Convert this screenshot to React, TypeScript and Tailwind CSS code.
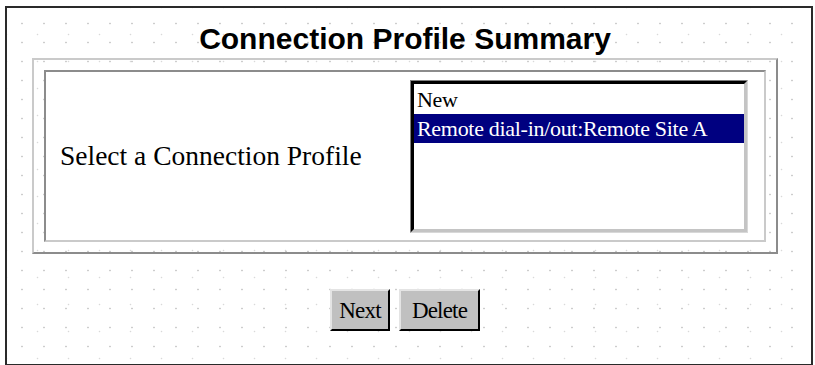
import { useState } from "react";

const profiles = ["New", "Remote dial-in/out:Remote Site A"];

function ListBox() {
  const [selected, setSelected] = useState(1);
  return (
    <div className="h-[153px] w-[338px] border border-b-[#d8d8d8] border-l-[#808080] border-r-[#d8d8d8] border-t-[#808080] bg-white">
      <div className="h-full w-full border-[3px] border-b-[#c4c4c4] border-l-black border-r-[#c4c4c4] border-t-black pt-px">
        {profiles.map((p, i) => (
          <div
            key={p}
            onClick={() => setSelected(i)}
            className={`h-[29px] cursor-default whitespace-nowrap px-[3px] text-[22px] leading-[29px] tracking-[-0.3px] ${
              i === selected ? "bg-[#000080] text-white" : "text-black"
            }`}
          >
            {p}
          </div>
        ))}
      </div>
    </div>
  );
}

function Button({ label, width }: { label: string; width: string }) {
  return (
    <button
      className={`${width} h-[42px] border-2 border-b-black border-l-[#e4e4e4] border-r-black border-t-[#e4e4e4] bg-[#c0c0c0] text-[23px] leading-none tracking-[-0.8px] text-black`}
    >
      {label}
    </button>
  );
}

export default function App() {
  return (
    <div className="h-[365px] w-[815px] overflow-hidden bg-white pl-[5px] pt-[6px] font-['Liberation_Serif',serif]">
      <div className="h-[360px] w-[808px] border-2 border-[#2a2a2a] bg-white bg-[radial-gradient(circle,#cdcdcd_0.7px,transparent_1.2px),radial-gradient(circle,#d9d9d9_0.6px,transparent_1.1px)] bg-[length:22px_19px,31px_27px] bg-[position:4px_6px,15px_13px]">
        <div className="ml-[25px] w-[746px]">
          <h1 className="mt-[16px] text-center font-['Liberation_Sans',Arial,sans-serif] text-[30px] font-bold leading-[30px] text-black">
            Connection Profile Summary
          </h1>
          <div className="mt-[4px] border-2 border-b-[#8c8c8c] border-l-[#cacaca] border-r-[#8c8c8c] border-t-[#cacaca] p-[10px]">
            <div className="flex h-[172px] items-center justify-between border-2 border-b-[#cacaca] border-l-[#8c8c8c] border-r-[#cacaca] border-t-[#8c8c8c] bg-white pl-[14px] pr-[16px]">
              <span className="text-[27.5px] leading-none text-black">
                Select a Connection Profile
              </span>
              <ListBox />
            </div>
          </div>
          <div className="mt-[35px] flex justify-center gap-[9px]">
            <Button label="Next" width="w-[60px]" />
            <Button label="Delete" width="w-[81px]" />
          </div>
        </div>
      </div>
    </div>
  );
}
